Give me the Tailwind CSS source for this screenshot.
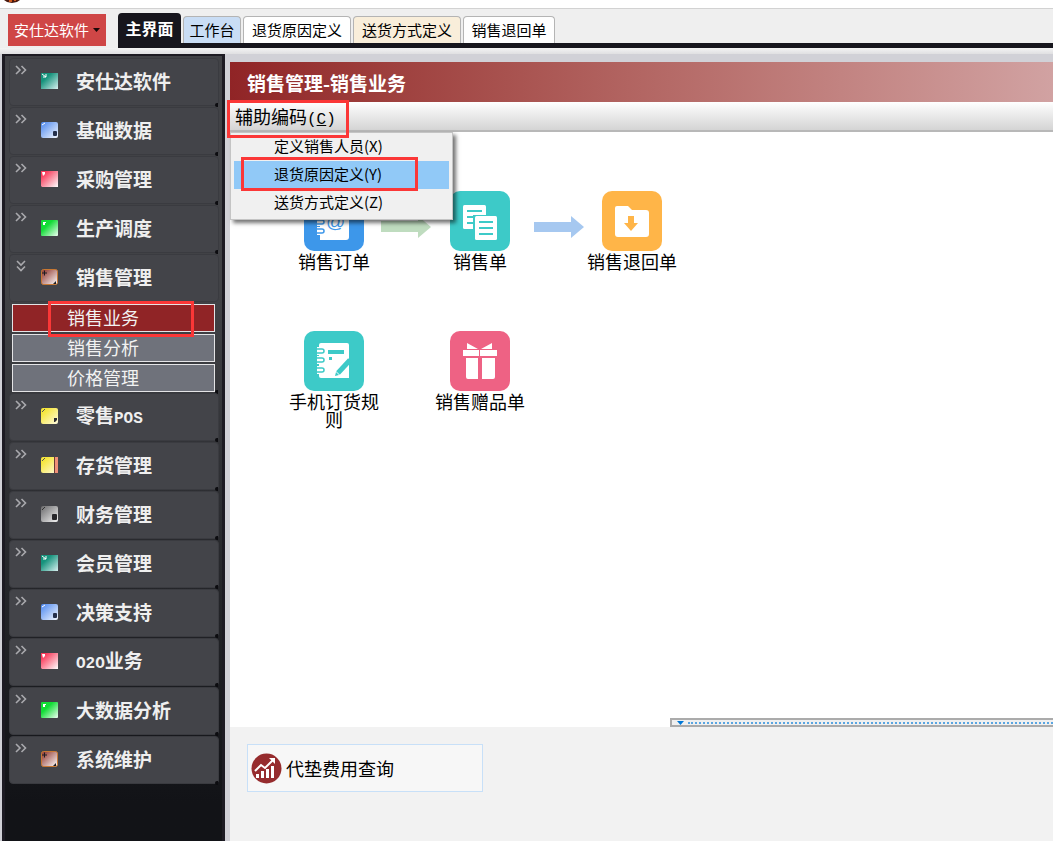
<!DOCTYPE html>
<html lang="zh-CN">
<head>
    <meta charset="UTF-8">
    <meta name="viewport" content="width=device-width, initial-scale=1.0">
    <title>安仕达软件 - 销售业务</title>
    <script src="https://cdn.jsdelivr.net/npm/@tailwindcss/browser@4"></script>
</head>
<body class="h-screen flex flex-col overflow-hidden bg-[#d1d1d7] font-['Noto_Sans_CJK_SC',sans-serif] text-black">

    <!-- Shared icon shapes -->
    <svg class="absolute w-0 h-0">
        <defs>
            <linearGradient id="g-teal" x1="0" y1="0" x2="1" y2="1"><stop offset="0.3" stop-color="#16937c"/><stop offset="1" stop-color="#d8f0f0"/></linearGradient>
            <linearGradient id="g-blue" x1="0" y1="0" x2="1" y2="1"><stop offset="0" stop-color="#4a86ee"/><stop offset="1" stop-color="#f4f8ff"/></linearGradient>
            <linearGradient id="g-red" x1="0" y1="0" x2="1" y2="1"><stop offset="0.15" stop-color="#f83858"/><stop offset="1" stop-color="#ffffff"/></linearGradient>
            <linearGradient id="g-green" x1="0" y1="0" x2="1" y2="1"><stop offset="0.35" stop-color="#12dc36"/><stop offset="1" stop-color="#f0fff4"/></linearGradient>
            <linearGradient id="g-brown" x1="0" y1="0" x2="1" y2="1"><stop offset="0.15" stop-color="#9c4c44"/><stop offset="1" stop-color="#ffffff"/></linearGradient>
            <linearGradient id="g-yellow" x1="0" y1="0" x2="1" y2="1"><stop offset="0.2" stop-color="#f6e63c"/><stop offset="1" stop-color="#fffbe0"/></linearGradient>
            <linearGradient id="g-gray" x1="0" y1="0" x2="1" y2="1"><stop offset="0" stop-color="#6a6a6c"/><stop offset="1" stop-color="#f2f2f2"/></linearGradient>
        </defs>
        <symbol id="i-teal" viewBox="0 0 17 16"><path d="M0 0h17v16H0z" fill="url(#g-teal)"/><path d="M1 1l4 3M5 1v3H2" stroke="#fff" fill="none"/></symbol>
        <symbol id="i-blue" viewBox="0 0 17 16"><rect width="17" height="16" rx="2" fill="url(#g-blue)"/><path d="M1 3l3-2" stroke="#fff"/><rect x="12" y="9" width="4" height="5" rx="1" fill="#24304c"/></symbol>
        <symbol id="i-red" viewBox="0 0 17 16"><path d="M0 0h17v16H1L0 15z" fill="url(#g-red)"/><path d="M1 1h3v2L2 5z" fill="#fff"/></symbol>
        <symbol id="i-green" viewBox="0 0 17 16"><rect width="17" height="16" rx="1" fill="url(#g-green)"/><path d="M2 2h3v1H4v2H2z" fill="#fff"/></symbol>
        <symbol id="i-brown" viewBox="0 0 17 16"><rect x="0.5" y="0.5" width="16" height="15" rx="2" fill="url(#g-brown)" stroke="#c87832"/><path d="M3.500 1.500v5M1 4h5" stroke="#1c1c22"/><path d="M15 12v3h-3z" fill="#1c1c22"/></symbol>
        <symbol id="i-yellow" viewBox="0 0 17 16"><rect width="17" height="16" rx="2" fill="url(#g-yellow)"/><path d="M1 4l3-3" stroke="#555"/><path d="M13 10h3v2l-2 2h-1z" fill="#2c2c30"/></symbol>
        <symbol id="i-book" viewBox="0 0 17 16"><rect width="17" height="16" rx="2" fill="url(#g-yellow)"/><path d="M1 4l3-3" stroke="#555"/><path d="M13 0h1v16h-1z" fill="#6a3c34"/><path d="M14 0h3v16h-3z" fill="#f09078"/></symbol>
        <symbol id="i-gray" viewBox="0 0 17 16"><rect width="17" height="16" rx="2" fill="url(#g-gray)"/><path d="M1 4l3-3" stroke="#333"/><rect x="11" y="8" width="5" height="6" rx="1" fill="#26262a"/></symbol>
        <symbol id="chevrons" viewBox="0 0 12 10"><path d="M1 1l4 4-4 4M6.500 1l4 4-4 4" fill="none" stroke="#a9a9ad" stroke-width="1.600"/></symbol>
    </svg>

    <!-- Title strip with the bottom of the app logo -->
    <div class="h-2 shrink-0 bg-white px-1">
        <svg class="w-4 h-[3px]" viewBox="0 0 16 3"><path d="M0 0h16l-3 2-5 1-5-1z" fill="#4a1a10"/><path d="M5 0h3v2H5zM10 0h2v1h-2z" fill="#d2591c"/></svg>
    </div>

    <!-- Tabs -->
    <header class="h-10 shrink-0 flex bg-[#efefef] border-t border-[#d2d2d2] pl-2 text-[15px]">
        <button class="mt-[5px] w-[98px] h-8 flex items-center justify-center gap-1 bg-[#cf4646] text-white whitespace-nowrap">
            安仕达软件
            <svg class="w-[7px] h-1" viewBox="0 0 7 4"><path d="M0 0h7L3.500 4z" fill="#1a0808"/></svg>
        </button>
        <nav class="ml-3 mt-1 flex-1 flex items-end gap-[2px] border-b-[5px] border-[#17161d] whitespace-nowrap">
            <button class="w-[63px] h-[30px] rounded-t bg-[#17161d] text-white text-base font-bold leading-[30px]">主界面</button>
            <button class="w-[58px] h-[27px] rounded-t border border-b-0 border-[#b4b4b4] bg-[#c9ddf5] leading-[24px]">工作台</button>
            <button class="w-[108px] h-[27px] rounded-t border border-b-0 border-[#b4b4b4] bg-white leading-[24px]">退货原因定义</button>
            <button class="w-[108px] h-[27px] rounded-t border border-b-0 border-[#b4b4b4] bg-[#f9eeda] leading-[24px]">送货方式定义</button>
            <button class="w-[92px] h-[27px] rounded-t border border-b-0 border-[#b4b4b4] bg-[#fefefe] leading-[24px]">销售退回单</button>
        </nav>
    </header>
    <div class="h-[6px] shrink-0 bg-linear-to-b from-[#f4f4f4] to-[#e0e0e2]"></div>

    <div class="flex-1 min-h-0 flex">
        <!-- Sidebar -->
        <aside class="ml-[2px] w-[223px] shrink-0 border-t-2 border-x-[3px] border-[#1d1b23] bg-linear-to-b from-[#414246] from-30% to-[#121317] to-95% px-1 pt-[2px]">
            <ul id="sidebar"></ul>
        </aside>

        <!-- Main -->
        <main class="ml-[5px] mt-2 flex-1 min-w-0 flex flex-col">
            <h1 class="h-10 shrink-0 bg-linear-to-r from-[#902426] to-[#d1a2a2] pl-[17px] text-[19px] leading-[42px] font-bold text-white">销售管理-销售业务</h1>

            <div class="relative z-10 h-[30px] shrink-0 bg-linear-to-b from-white to-[#d4d4d4] border-b-2 border-[#b8b8b8]">
                <button class="block pl-[5px] h-[30px] text-lg leading-[28px] whitespace-nowrap">辅助编码<span class="font-['Liberation_Mono',monospace] text-base">(<u>C</u>)</span></button>
                <div class="absolute -left-[3px] -top-[2px] w-[122px] h-[38px] border-3 border-[#fb3737] z-20 pointer-events-none"></div>

                <!-- Dropdown -->
                <div class="absolute left-0 top-[30px] w-[223px] h-[88px] bg-[#f0f0f0] border border-[#c4c4c4] p-[3px] pt-0 shadow-[3px_3px_4px_rgba(0,0,0,0.55)] text-[15px] leading-[26px]">
                    <button class="block w-full h-7 pl-10 pb-[2px] text-left">定义销售人员(X)</button>
                    <button class="block w-full h-7 pl-10 pb-[2px] text-left bg-[#91c9f7]">退货原因定义(Y)</button>
                    <button class="block w-full h-7 pl-10 pb-[2px] text-left">送货方式定义(Z)</button>
                    <div class="absolute left-[10px] top-6 w-[177px] h-[34px] border-3 border-[#fb3737] pointer-events-none"></div>
                </div>
            </div>

            <!-- Flow canvas -->
            <section class="flex-1 min-h-0 bg-white flex flex-col pt-[59px]">
                <div class="grid grid-cols-[90px_56px_90px_62px_90px] auto-rows-[140px] pl-[59px] text-lg leading-[18px]">
                    <button class="flex flex-col items-center gap-px">
                        <svg class="w-[60px] h-[60px] shrink-0" viewBox="0 0 60 60">
                            <rect width="60" height="60" rx="10" fill="#3d97ea"/>
                            <path d="M16 12h26a3 3 0 0 1 3 3v31a3 3 0 0 1-3 3H16z" fill="#fff"/>
                            <path d="M13 20h5a2 2 0 0 1 0 4h-5M13 29h5a2 2 0 0 1 0 4h-5M13 38h5a2 2 0 0 1 0 4h-5" fill="none" stroke="#fff" stroke-width="4"/>
                            <path d="M13 20h5a2 2 0 0 1 0 4h-5M13 29h5a2 2 0 0 1 0 4h-5M13 38h5a2 2 0 0 1 0 4h-5" fill="none" stroke="#3d97ea" stroke-width="1.500"/>
                            <text x="22" y="37" font-size="19" font-family="Liberation Sans" fill="#3d97ea">@</text>
                        </svg>
                        销售订单
                    </button>
                    <svg class="mt-[25px] mr-1 justify-self-end w-[50px] h-[22px]" viewBox="0 0 50 22"><path d="M0 5h37V0l13 11-13 11v-6H0z" fill="#bfdcbf"/></svg>
                    <button class="flex flex-col items-center gap-px">
                        <svg class="w-[60px] h-[60px] shrink-0" viewBox="0 0 60 60">
                            <rect width="60" height="60" rx="10" fill="#3dcac8"/>
                            <rect x="13" y="14" width="23" height="24" rx="1.500" fill="#fff"/>
                            <path d="M17 20h15M17 26h9M17 32h6" stroke="#3dcac8" stroke-width="2"/>
                            <rect x="23" y="24" width="25" height="27" fill="#3dcac8"/>
                            <rect x="25" y="25" width="22" height="24" rx="1.500" fill="#fff"/>
                            <path d="M29 31h14M29 37h14M29 43h14" stroke="#3dcac8" stroke-width="2"/>
                        </svg>
                        销售单
                    </button>
                    <svg class="mt-[25px] mr-[3px] justify-self-end w-[50px] h-[22px]" viewBox="0 0 50 22"><path d="M0 6h37V0l13 11-13 11v-6H0z" fill="#a6c8f0"/></svg>
                    <button class="flex flex-col items-center gap-px whitespace-nowrap">
                        <svg class="w-[60px] h-[60px] shrink-0" viewBox="0 0 60 60">
                            <rect width="60" height="60" rx="10" fill="#ffb548"/>
                            <path d="M15 15h11l4 4h14a3 3 0 0 1 3 3v21a3 3 0 0 1-3 3H16a3 3 0 0 1-3-3V17a2 2 0 0 1 2-2z" fill="#fff"/>
                            <path d="M26 25h6v7h4l-7 8-7-8h4z" fill="#ffb548"/>
                        </svg>
                        销售退回单
                    </button>

                    <button class="flex flex-col items-center gap-px">
                        <svg class="w-[60px] h-[60px] shrink-0" viewBox="0 0 60 60">
                            <rect width="60" height="60" rx="10" fill="#3dcac8"/>
                            <path d="M17 12h26a2 2 0 0 1 2 2v33H17a2 2 0 0 1-2-2V14a2 2 0 0 1 2-2z" fill="#fff"/>
                            <path d="M13 18h5a2 2 0 0 1 0 4h-5M13 27h5a2 2 0 0 1 0 4h-5M13 37h5a2 2 0 0 1 0 4h-5" fill="none" stroke="#fff" stroke-width="4"/>
                            <path d="M13 18h5a2 2 0 0 1 0 4h-5M13 27h5a2 2 0 0 1 0 4h-5M13 37h5a2 2 0 0 1 0 4h-5" fill="none" stroke="#3dcac8" stroke-width="1.500"/>
                            <path d="M24 19h16v4H24zM25 26h3v3h-3z" fill="#3dcac8"/>
                            <path d="M46 29L34 42" stroke="#3dcac8" stroke-width="5"/>
                            <path d="M32 41l3 3-4 1z" fill="#3dcac8"/>
                        </svg>
                        <span class="w-[90px]">手机订货规则</span>
                    </button>
                    <button class="col-start-3 flex flex-col items-center gap-px whitespace-nowrap">
                        <svg class="w-[60px] h-[60px] shrink-0" viewBox="0 0 60 60">
                            <rect width="60" height="60" rx="10" fill="#ee6284"/>
                            <path d="M17 12l11 6H17zM42 12l-11 6h11zM13 19h16v6H13zM30 19h17v6H30zM16 27h12v21H18a2 2 0 0 1-2-2zM32 27h13v19a2 2 0 0 1-2 2H32z" fill="#fff"/>
                        </svg>
                        销售赠品单
                    </button>
                </div>

                <!-- Splitter -->
                <div class="mt-auto ml-[440px] h-[9px] flex items-center gap-1 border-2 border-r-0 border-[#ababab] bg-[#f0f0f0] pl-[5px]">
                    <svg class="w-[7px] h-1" viewBox="0 0 7 4"><path d="M0 0h7L3.500 4z" fill="#0078d7"/></svg>
                    <div class="flex-1 border-t-2 border-dotted border-[#5aa6e2]"></div>
                </div>
            </section>

            <!-- Reports -->
            <footer class="h-[114px] shrink-0 bg-[#f2f2f2] pl-[17px] pt-[17px]">
                <button class="w-[236px] h-12 flex items-center gap-1 bg-[#f7f7f7] border border-[#c8e0f8] pl-[3px] text-lg">
                    <svg class="w-[31px] h-[31px]" viewBox="0 0 31 31">
                        <circle cx="15.500" cy="15.500" r="15" fill="#962c2e"/>
                        <path d="M5 25v-4h3v4zM10 25v-7h3v7zM15 25v-9h3v9zM20 25V13h3v12z" fill="#fff"/>
                        <path d="M4 18l6-6 4 3 8-8" fill="none" stroke="#fff" stroke-width="2"/>
                        <path d="M18 5h6v6z" fill="#fff"/>
                    </svg>
                    代垫费用查询
                </button>
            </footer>
        </main>
    </div>

    <script>
        const menu = [
            { name: '安仕达软件', icon: 'teal' },
            { name: '基础数据', icon: 'blue' },
            { name: '采购管理', icon: 'red' },
            { name: '生产调度', icon: 'green' },
            { name: '销售管理', icon: 'brown', children: ['销售业务', '销售分析', '价格管理'] },
            { name: '零售<span class="font-[\'Liberation_Mono\',monospace] text-base">POS</span>', icon: 'yellow' },
            { name: '存货管理', icon: 'book' },
            { name: '财务管理', icon: 'gray' },
            { name: '会员管理', icon: 'teal' },
            { name: '决策支持', icon: 'blue' },
            { name: '<span class="font-[\'Liberation_Mono\',monospace] text-base">O2O</span>业务', icon: 'red' },
            { name: '大数据分析', icon: 'green' },
            { name: '系统维护', icon: 'brown' },
        ];

        // Open group: first child is the current page
        const subItem = (name, i) => `
            <li class="relative">
                <button class="block w-full h-7 border border-[#e4e4e6] pl-[54px] pb-[2px] text-left text-lg leading-6 text-[#f2f2f2] ${i === 0 ? 'bg-[#902426]' : 'bg-[#6f727b]'}">${name}</button>
                ${i === 0 ? '<div class="absolute left-9 -top-[3px] w-[146px] h-9 z-10 border-3 border-[#fb3737] pointer-events-none"></div>' : ''}
            </li>`;

        document.getElementById('sidebar').innerHTML = menu.map(item => `
            <li class="relative">
                <button class="relative flex items-center w-[210px] h-12 mb-px rounded border border-[#3a3b40] bg-[#434449] pl-[31px] pb-[2px] gap-[18px] text-[19px] font-bold text-[#efefef]">
                    <svg class="absolute left-[5px] top-[6px] w-3 h-[10px] ${item.children ? 'rotate-90' : ''}"><use href="#chevrons"/></svg>
                    <svg class="w-[17px] h-4"><use href="#i-${item.icon}"/></svg>
                    <span>${item.name}</span>
                </button>
                <i class="absolute right-0 -bottom-px w-[3px] h-1 rounded-l-full bg-[#0c0c10]"></i>
                ${item.children ? `<ul class="ml-[3px] w-[203px] space-y-[2px] py-px">${item.children.map(subItem).join('')}</ul>` : ''}
            </li>`).join('');
    </script>

</body>
</html>
